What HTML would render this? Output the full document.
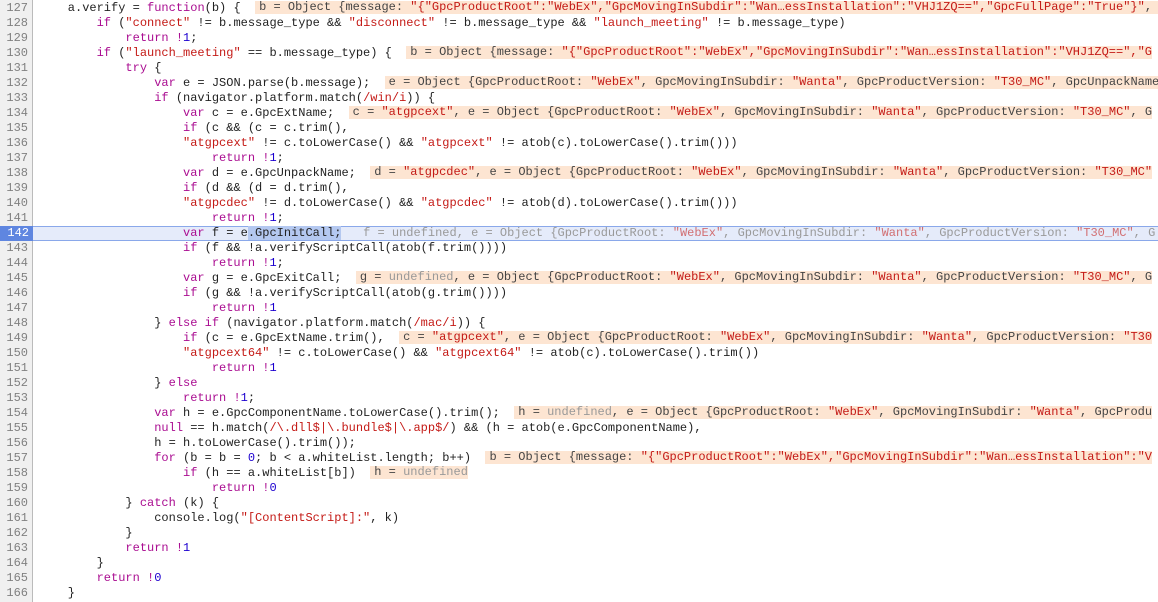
<!DOCTYPE html>
<html><head><meta charset="utf-8"><style>
body{margin:0;width:1158px;height:602px;overflow:hidden;background:#fff;font-family:"Liberation Mono",monospace;font-size:12px;color:#222}
.wrap{position:relative;padding-top:1px}
.gbg{position:absolute;left:0;top:0;width:33px;height:602px;background:#f0f0f0;border-right:1px solid #bbb;box-sizing:border-box}
.row{position:relative;height:15px;line-height:15px;white-space:pre;}
.g{position:absolute;left:0;top:0;width:33px;height:15px;background:#f0f0f0;border-right:1px solid #bbb;text-align:right;padding-right:4px;box-sizing:border-box;color:#808080}
.c{position:absolute;left:39px;top:0;white-space:pre}
.k{color:#aa0d91}.s{color:#c41a16}.n{color:#1c00cf}.x{color:#aa0d91}
.v{background:#fde5d2;color:#444;padding:0 0 0 4px;display:inline-block;height:13px;line-height:13px;vertical-align:1px}
.u{color:#999}
.vg{color:#999}.vg .s{color:#c41a16;opacity:.6}
.hl{background:#e5ebfa;border-top:1px solid #8aa8ea;border-bottom:1px solid #8aa8ea;box-sizing:border-box}
.hl .c{top:-1px}
.hl .g{background:#5f86e0;color:#fff;top:-1px;height:15px;width:33px;border:none}
.sel{background:#b4c8f0}
</style></head><body><div class="gbg"></div><div class="wrap">
<div class="row"><span class="g">127</span><span class="c">    a.verify = <span class="k">function</span>(b) {  <span class="v">b = Object {message: <span class="s">"{"GpcProductRoot":"WebEx","GpcMovingInSubdir":"Wan…essInstallation":"VHJ1ZQ==","GpcFullPage":"True"}"</span>, </span></span></div>
<div class="row"><span class="g">128</span><span class="c">        <span class="k">if</span> (<span class="s">"connect"</span> != b.message_type &amp;&amp; <span class="s">"disconnect"</span> != b.message_type &amp;&amp; <span class="s">"launch_meeting"</span> != b.message_type)</span></div>
<div class="row"><span class="g">129</span><span class="c">            <span class="k">return</span> <span class="x">!</span><span class="n">1</span>;</span></div>
<div class="row"><span class="g">130</span><span class="c">        <span class="k">if</span> (<span class="s">"launch_meeting"</span> == b.message_type) {  <span class="v">b = Object {message: <span class="s">"{"GpcProductRoot":"WebEx","GpcMovingInSubdir":"Wan…essInstallation":"VHJ1ZQ==","G</span></span></span></div>
<div class="row"><span class="g">131</span><span class="c">            <span class="k">try</span> {</span></div>
<div class="row"><span class="g">132</span><span class="c">                <span class="k">var</span> e = JSON.parse(b.message);  <span class="v">e = Object {GpcProductRoot: <span class="s">"WebEx"</span>, GpcMovingInSubdir: <span class="s">"Wanta"</span>, GpcProductVersion: <span class="s">"T30_MC"</span>, GpcUnpackName</span></span></div>
<div class="row"><span class="g">133</span><span class="c">                <span class="k">if</span> (navigator.platform.match(<span class="s">/win/i</span>)) {</span></div>
<div class="row"><span class="g">134</span><span class="c">                    <span class="k">var</span> c = e.GpcExtName;  <span class="v">c = <span class="s">"atgpcext"</span>, e = Object {GpcProductRoot: <span class="s">"WebEx"</span>, GpcMovingInSubdir: <span class="s">"Wanta"</span>, GpcProductVersion: <span class="s">"T30_MC"</span>, G</span></span></div>
<div class="row"><span class="g">135</span><span class="c">                    <span class="k">if</span> (c &amp;&amp; (c = c.trim(),</span></div>
<div class="row"><span class="g">136</span><span class="c">                    <span class="s">"atgpcext"</span> != c.toLowerCase() &amp;&amp; <span class="s">"atgpcext"</span> != atob(c).toLowerCase().trim()))</span></div>
<div class="row"><span class="g">137</span><span class="c">                        <span class="k">return</span> <span class="x">!</span><span class="n">1</span>;</span></div>
<div class="row"><span class="g">138</span><span class="c">                    <span class="k">var</span> d = e.GpcUnpackName;  <span class="v">d = <span class="s">"atgpcdec"</span>, e = Object {GpcProductRoot: <span class="s">"WebEx"</span>, GpcMovingInSubdir: <span class="s">"Wanta"</span>, GpcProductVersion: <span class="s">"T30_MC"</span></span></span></div>
<div class="row"><span class="g">139</span><span class="c">                    <span class="k">if</span> (d &amp;&amp; (d = d.trim(),</span></div>
<div class="row"><span class="g">140</span><span class="c">                    <span class="s">"atgpcdec"</span> != d.toLowerCase() &amp;&amp; <span class="s">"atgpcdec"</span> != atob(d).toLowerCase().trim()))</span></div>
<div class="row"><span class="g">141</span><span class="c">                        <span class="k">return</span> <span class="x">!</span><span class="n">1</span>;</span></div>
<div class="row hl"><span class="g">142</span><span class="c">                    <span class="k">var</span> f = e<span class="sel">.GpcInitCall;</span>  <span class="vg"> f = undefined, e = Object {GpcProductRoot: <span class="s">"WebEx"</span>, GpcMovingInSubdir: <span class="s">"Wanta"</span>, GpcProductVersion: <span class="s">"T30_MC"</span>, G</span></span></div>
<div class="row"><span class="g">143</span><span class="c">                    <span class="k">if</span> (f &amp;&amp; !a.verifyScriptCall(atob(f.trim())))</span></div>
<div class="row"><span class="g">144</span><span class="c">                        <span class="k">return</span> <span class="x">!</span><span class="n">1</span>;</span></div>
<div class="row"><span class="g">145</span><span class="c">                    <span class="k">var</span> g = e.GpcExitCall;  <span class="v">g = <span class="u">undefined</span>, e = Object {GpcProductRoot: <span class="s">"WebEx"</span>, GpcMovingInSubdir: <span class="s">"Wanta"</span>, GpcProductVersion: <span class="s">"T30_MC"</span>, G</span></span></div>
<div class="row"><span class="g">146</span><span class="c">                    <span class="k">if</span> (g &amp;&amp; !a.verifyScriptCall(atob(g.trim())))</span></div>
<div class="row"><span class="g">147</span><span class="c">                        <span class="k">return</span> <span class="x">!</span><span class="n">1</span></span></div>
<div class="row"><span class="g">148</span><span class="c">                } <span class="k">else if</span> (navigator.platform.match(<span class="s">/mac/i</span>)) {</span></div>
<div class="row"><span class="g">149</span><span class="c">                    <span class="k">if</span> (c = e.GpcExtName.trim(),  <span class="v">c = <span class="s">"atgpcext"</span>, e = Object {GpcProductRoot: <span class="s">"WebEx"</span>, GpcMovingInSubdir: <span class="s">"Wanta"</span>, GpcProductVersion: <span class="s">"T30</span></span></span></div>
<div class="row"><span class="g">150</span><span class="c">                    <span class="s">"atgpcext64"</span> != c.toLowerCase() &amp;&amp; <span class="s">"atgpcext64"</span> != atob(c).toLowerCase().trim())</span></div>
<div class="row"><span class="g">151</span><span class="c">                        <span class="k">return</span> <span class="x">!</span><span class="n">1</span></span></div>
<div class="row"><span class="g">152</span><span class="c">                } <span class="k">else</span></span></div>
<div class="row"><span class="g">153</span><span class="c">                    <span class="k">return</span> <span class="x">!</span><span class="n">1</span>;</span></div>
<div class="row"><span class="g">154</span><span class="c">                <span class="k">var</span> h = e.GpcComponentName.toLowerCase().trim();  <span class="v">h = <span class="u">undefined</span>, e = Object {GpcProductRoot: <span class="s">"WebEx"</span>, GpcMovingInSubdir: <span class="s">"Wanta"</span>, GpcProdu</span></span></div>
<div class="row"><span class="g">155</span><span class="c">                <span class="k">null</span> == h.match(<span class="s">/\.dll$|\.bundle$|\.app$/</span>) &amp;&amp; (h = atob(e.GpcComponentName),</span></div>
<div class="row"><span class="g">156</span><span class="c">                h = h.toLowerCase().trim());</span></div>
<div class="row"><span class="g">157</span><span class="c">                <span class="k">for</span> (b = b = <span class="n">0</span>; b &lt; a.whiteList.length; b++)  <span class="v">b = Object {message: <span class="s">"{"GpcProductRoot":"WebEx","GpcMovingInSubdir":"Wan…essInstallation":"V</span></span></span></div>
<div class="row"><span class="g">158</span><span class="c">                    <span class="k">if</span> (h == a.whiteList[b])  <span class="v">h = <span class="u">undefined</span></span></span></div>
<div class="row"><span class="g">159</span><span class="c">                        <span class="k">return</span> <span class="x">!</span><span class="n">0</span></span></div>
<div class="row"><span class="g">160</span><span class="c">            } <span class="k">catch</span> (k) {</span></div>
<div class="row"><span class="g">161</span><span class="c">                console.log(<span class="s">"[ContentScript]:"</span>, k)</span></div>
<div class="row"><span class="g">162</span><span class="c">            }</span></div>
<div class="row"><span class="g">163</span><span class="c">            <span class="k">return</span> <span class="x">!</span><span class="n">1</span></span></div>
<div class="row"><span class="g">164</span><span class="c">        }</span></div>
<div class="row"><span class="g">165</span><span class="c">        <span class="k">return</span> <span class="x">!</span><span class="n">0</span></span></div>
<div class="row"><span class="g">166</span><span class="c">    }</span></div>
</div>
</body></html>
